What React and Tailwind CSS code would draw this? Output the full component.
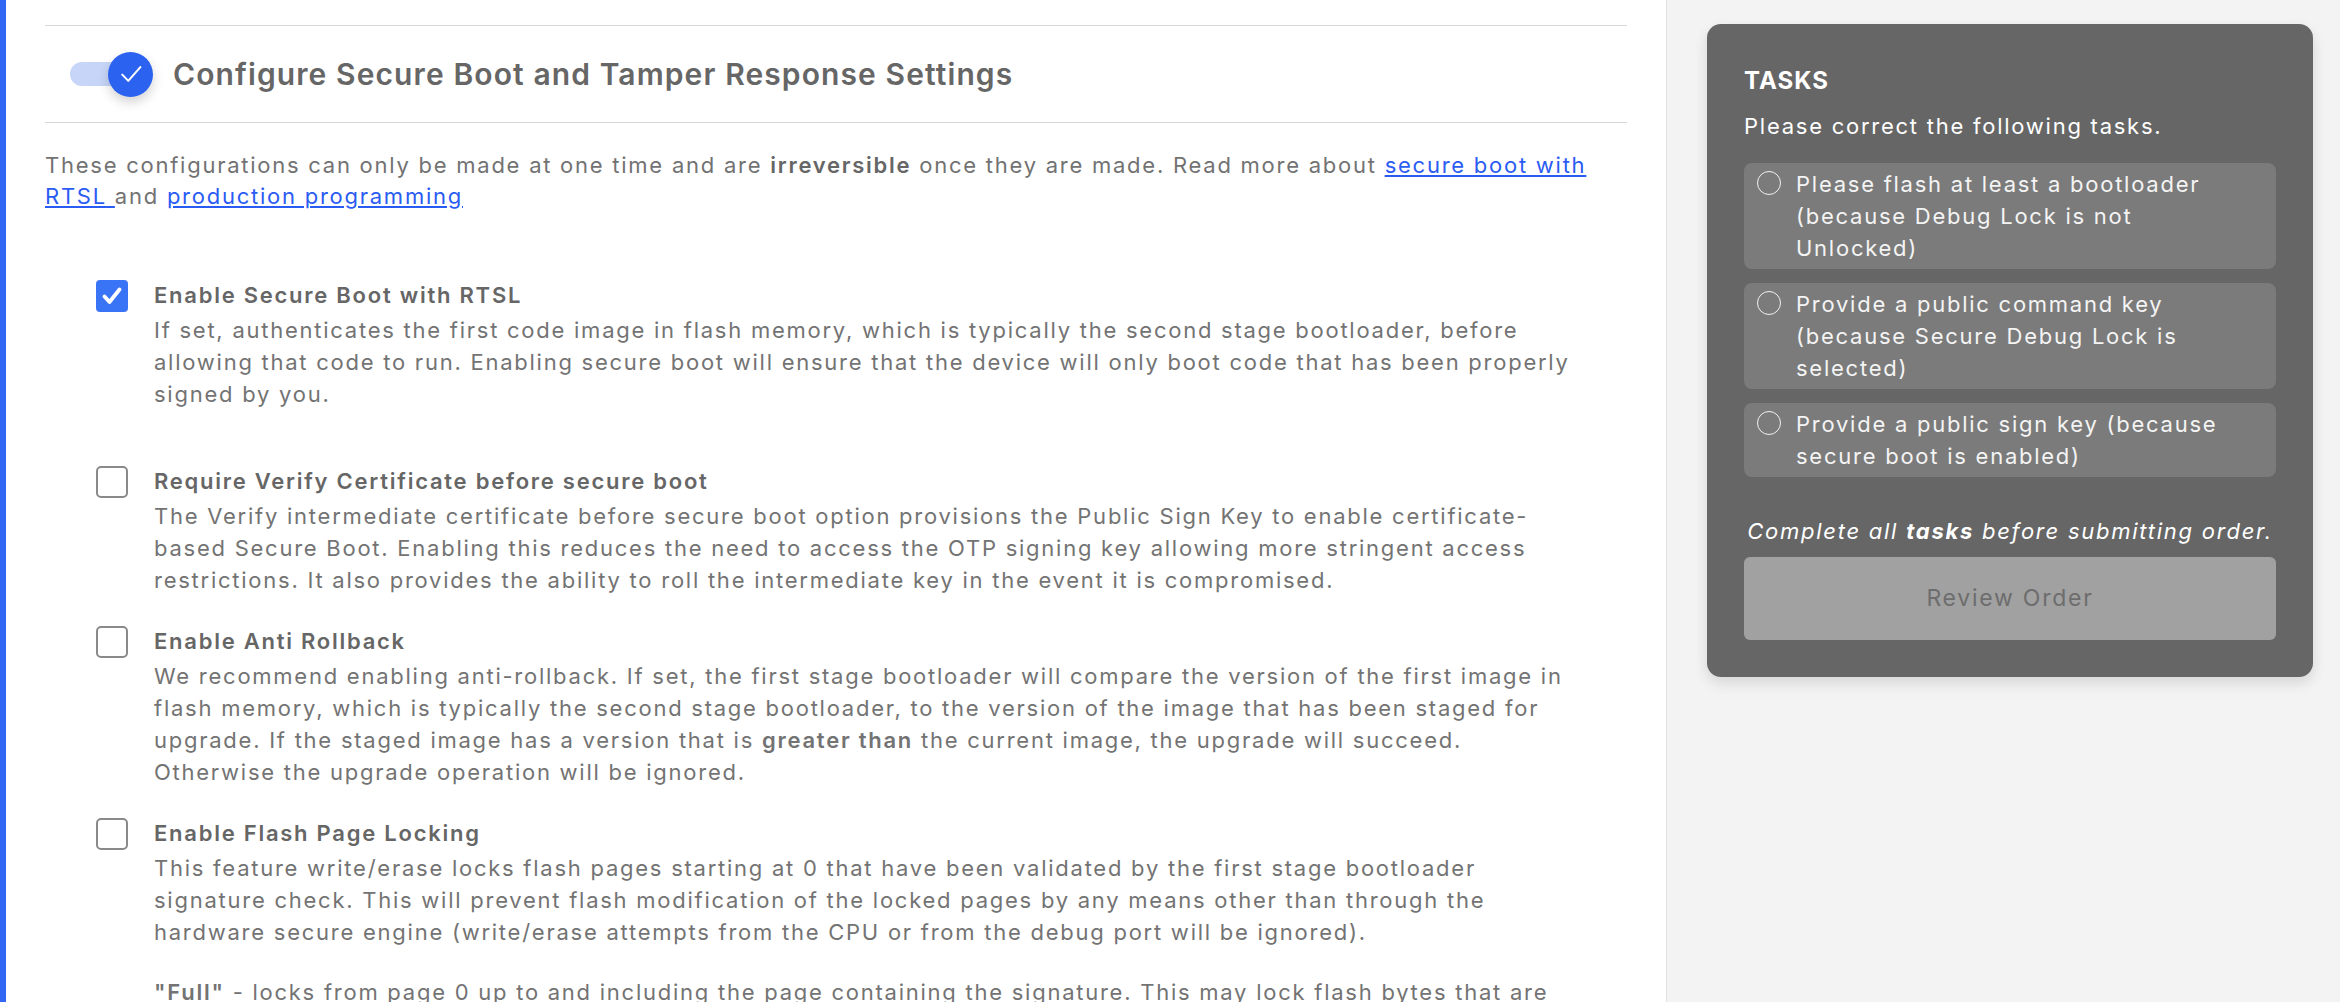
import React from 'react';

const options = [
  {
    id: 'secure-boot',
    label: 'Enable Secure Boot with RTSL',
    checked: true,
    extra: 'mb-[55px]',
    body: [
      'If set, authenticates the first code image in flash memory, which is typically the second stage bootloader, before allowing that code to run. Enabling secure boot will ensure that the device will only boot code that has been properly signed by you.',
    ],
  },
  {
    id: 'verify-cert',
    label: 'Require Verify Certificate before secure boot',
    extra: 'mb-[29px]',
    body: [
      'The Verify intermediate certificate before secure boot option provisions the Public Sign Key to enable certificate-based Secure Boot. Enabling this reduces the need to access the OTP signing key allowing more stringent access restrictions. It also provides the ability to roll the intermediate key in the event it is compromised.',
    ],
  },
  {
    id: 'anti-rollback',
    label: 'Enable Anti Rollback',
    extra: 'mb-[29px]',
    body: [
      <>
        We recommend enabling anti-rollback. If set, the first stage bootloader will compare the version of the first image in
        flash memory, which is typically the second stage bootloader, to the version of the image that has been staged for
        upgrade. If the staged image has a version that is <b className="font-semibold">greater than</b> the current image, the
        upgrade will succeed. Otherwise the upgrade operation will be ignored.
      </>,
    ],
  },
  {
    id: 'page-lock',
    label: 'Enable Flash Page Locking',
    extra: '',
    body: [
      'This feature write/erase locks flash pages starting at 0 that have been validated by the first stage bootloader signature check. This will prevent flash modification of the locked pages by any means other than through the hardware secure engine (write/erase attempts from the CPU or from the debug port will be ignored).',
      <>
        <b className="font-semibold">"Full"</b> - locks from page 0 up to and including the page containing the signature. This
        may lock flash bytes that are not part of the signed image and prevent them from being updated later.
      </>,
    ],
  },
];

const tasks = [
  'Please flash at least a bootloader (because Debug Lock is not Unlocked)',
  'Provide a public command key (because Secure Debug Lock is selected)',
  'Provide a public sign key (because secure boot is enabled)',
];

function Checkbox({ checked }) {
  if (checked) {
    return (
      <span className="mt-[1px] flex h-[32px] w-[32px] shrink-0 items-center justify-center rounded-[4px] bg-[#3a74f6]">
        <svg width="24" height="24" viewBox="0 0 24 24" fill="none">
          <path d="M4.5 12.5l5 5.5L19.5 5.5" stroke="white" strokeWidth="3.8" strokeLinecap="round" strokeLinejoin="round" />
        </svg>
      </span>
    );
  }
  return <span className="mt-[1px] h-[32px] w-[32px] shrink-0 rounded-[5px] border-[2px] border-[#8a8a8a] bg-white" />;
}

function Toggle() {
  return (
    <div className="relative ml-[25px] h-[45px] w-[83px] shrink-0">
      <div className="absolute left-0 top-[10px] h-[24px] w-[62px] rounded-full bg-[#c7d6f8]" />
      <div className="absolute right-0 top-0 flex h-[45px] w-[45px] items-center justify-center rounded-full bg-[#2c62f0] shadow-[0_5px_12px_rgba(0,0,0,0.18)]">
        <svg width="30" height="30" viewBox="0 0 24 24" fill="none">
          <path d="M5 12.5l4.8 5L19.5 6.5" stroke="white" strokeWidth="1.6" strokeLinecap="round" strokeLinejoin="round" />
        </svg>
      </div>
    </div>
  );
}

export default function App() {
  return (
    <div className="flex h-screen w-full overflow-hidden bg-white font-['Inter',sans-serif] tracking-[1.75px]">
      <div className="w-[6px] shrink-0 bg-[#3266f5]" />

      <main className="min-w-0 flex-1 px-[39px] pt-[25px]">
        <div className="flex h-[98px] items-center gap-[20px] border-y border-[#d8d8d8]">
          <Toggle />
          <h2 className="text-[30px] font-semibold leading-[40px] tracking-[1.1px] text-[#666666]">
            Configure Secure Boot and Tamper Response Settings
          </h2>
        </div>

        <p className="mt-[27px] text-[22px] leading-[31px] text-[#727272]">
          These configurations can only be made at one time and are{' '}
          <b className="font-semibold text-[#666666]">irreversible</b> once they are made. Read more about{' '}
          <a href="#" className="text-[#2a5cf3] underline">
            secure boot with RTSL{' '}
          </a>
          and{' '}
          <a href="#" className="text-[#2a5cf3] underline">
            production programming
          </a>
        </p>

        <div className="mt-[67px] px-[51px]">
          {options.map((opt) => (
            <div key={opt.id} className={`flex gap-[26px] ${opt.extra}`}>
              <Checkbox checked={opt.checked} />
              <div className="min-w-0 flex-1">
                <div className="text-[22px] font-semibold leading-[32px] text-[#666666]">{opt.label}</div>
                {opt.body.map((text, i) => (
                  <p
                    key={i}
                    className={`text-[22px] leading-[32px] text-[#737373] ${i === 0 ? 'mt-[3px]' : 'mt-[28px]'}`}
                  >
                    {text}
                  </p>
                ))}
              </div>
            </div>
          ))}
        </div>
      </main>

      <aside className="w-[674px] shrink-0 border-l border-[#e3e3e3] bg-[#f3f3f3] pl-[40px] pt-[24px]">
        <div className="w-[606px] rounded-[14px] bg-[#666666] px-[37px] pb-[37px] pt-[37px] shadow-[0_6px_14px_rgba(0,0,0,0.12)]">
          <h3 className="text-[24px] font-bold leading-[40px] tracking-[1px] text-white">TASKS</h3>
          <p className="mt-[9px] text-[22px] leading-[32px] text-white">Please correct the following tasks.</p>

          <ul className="mt-[21px] flex flex-col gap-[14px]">
            {tasks.map((task) => (
              <li key={task} className="flex gap-[15px] rounded-[8px] bg-[#7b7b7b] py-[5px] pl-[13px] pr-[38px]">
                <span className="mt-[3px] h-[24px] w-[24px] shrink-0 rounded-full border-[1.5px] border-[#f2f2f2]" />
                <span className="text-[22px] leading-[32px] text-[#f4f4f4]">{task}</span>
              </li>
            ))}
          </ul>

          <p className="mt-[38px] text-center text-[22px] italic leading-[32px] text-white">
            Complete all <b className="font-bold">tasks</b> before submitting order.
          </p>

          <button
            type="button"
            disabled
            className="mt-[10px] flex h-[83px] w-full items-center justify-center rounded-[6px] bg-[#a1a1a1] text-[23px] text-[#6d6d6d]"
          >
            Review Order
          </button>
        </div>
      </aside>
    </div>
  );
}
